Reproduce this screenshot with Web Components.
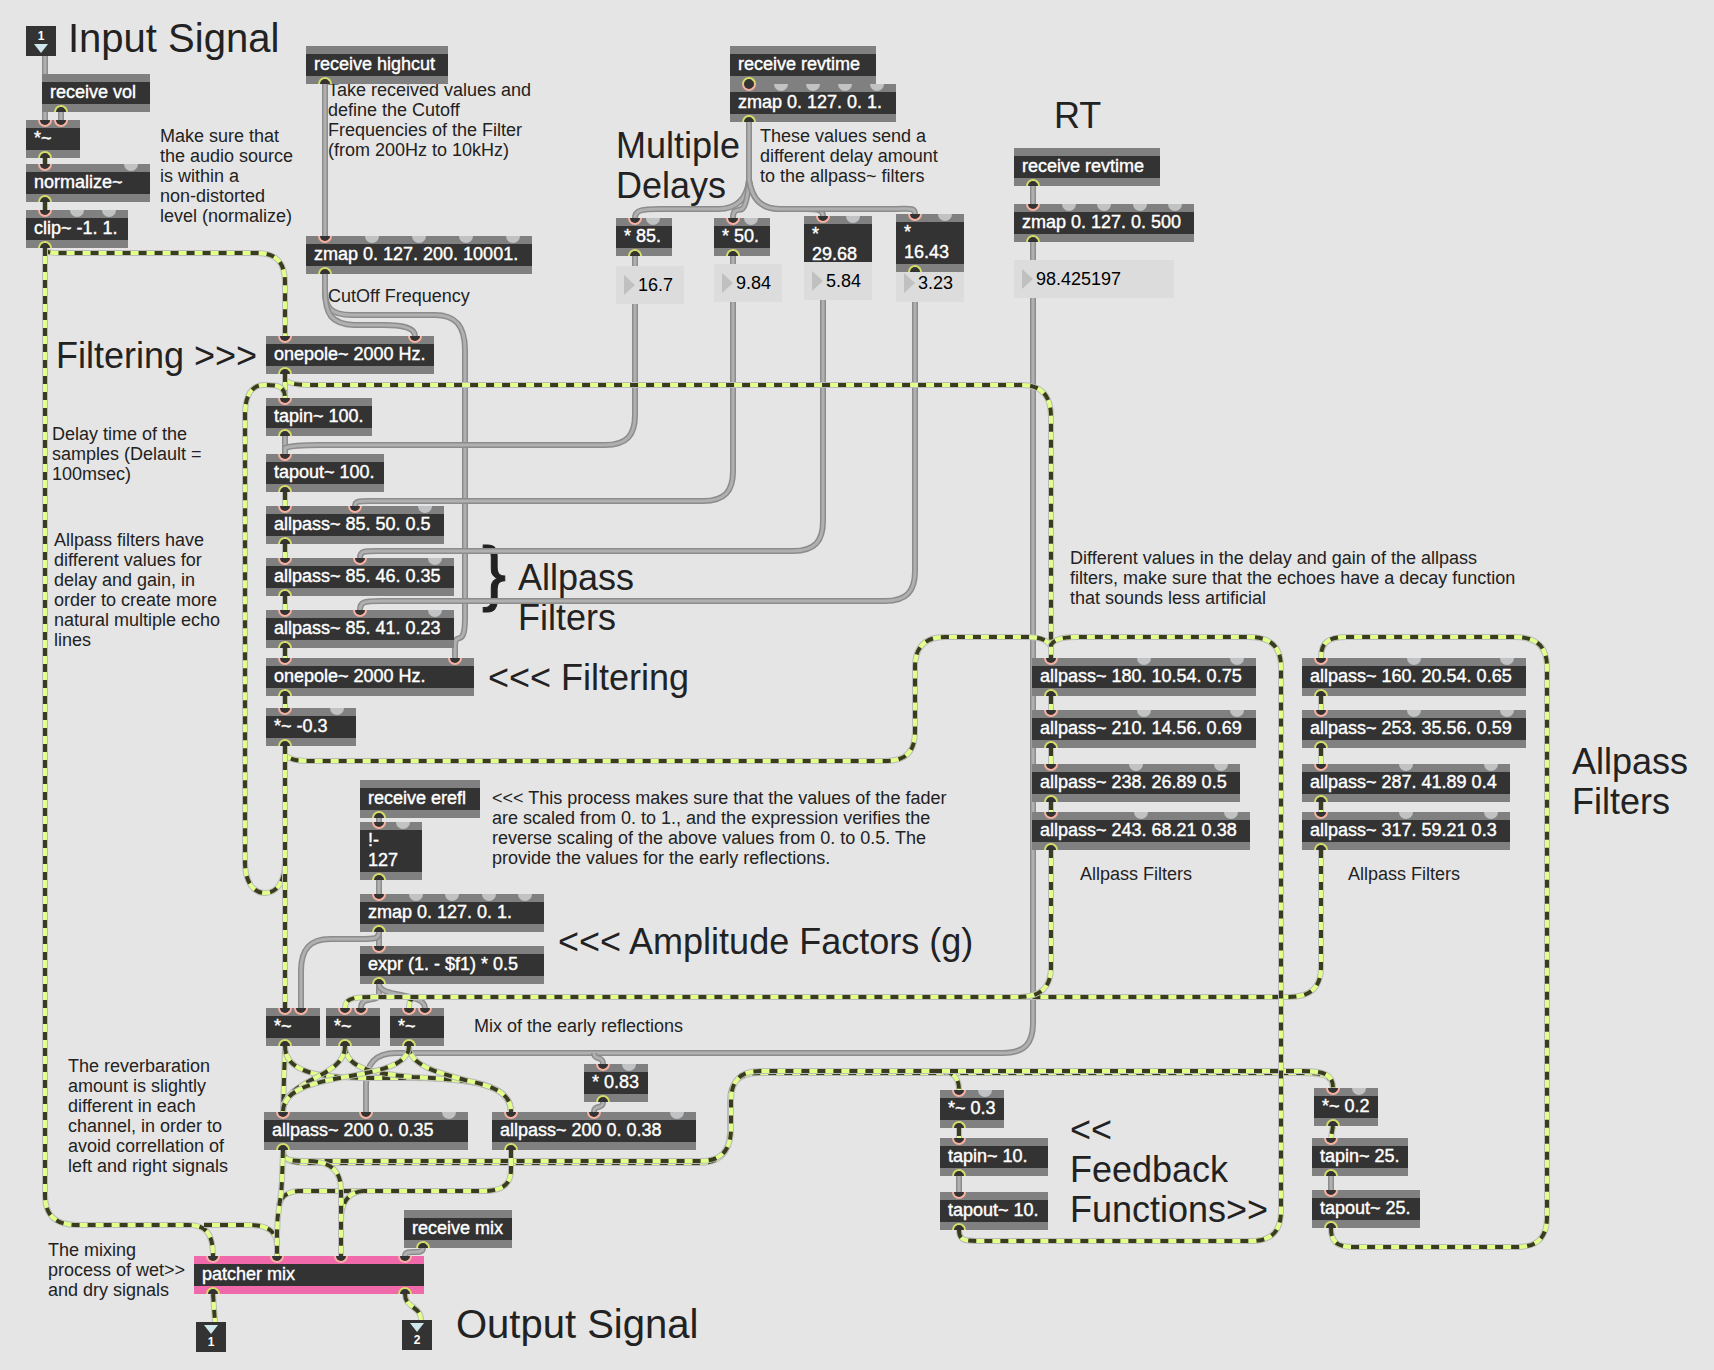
<!DOCTYPE html>
<html lang="en">
<head>
<meta charset="utf-8">
<title>Reverb patch</title>
<style>
  body { margin: 0; background: #e5e5e5; font-family: "Liberation Sans", Arial, sans-serif; }
</style>
</head>
<body>
<patch-canvas>
  <patch-note x="68" y="16" size="title">Input Signal</patch-note>
  <patch-note x="328" y="80">Take received values and
define the Cutoff
Frequencies of the Filter
(from 200Hz to 10kHz)</patch-note>
  <patch-note x="160" y="126">Make sure that
the audio source
is within a
non-distorted
level (normalize)</patch-note>
  <patch-note x="328" y="286">CutOff Frequency</patch-note>
  <patch-note x="56" y="336" size="head">Filtering &gt;&gt;&gt;</patch-note>
  <patch-note x="616" y="126" size="head">Multiple
Delays</patch-note>
  <patch-note x="760" y="126">These values send a
different delay amount
to the allpass~ filters</patch-note>
  <patch-note x="1054" y="96" size="head">RT</patch-note>
  <patch-note x="52" y="424">Delay time of the
samples (Delault =
100msec)</patch-note>
  <patch-note x="54" y="530">Allpass filters have
different values for
delay and gain, in
order to create more
natural multiple echo
lines</patch-note>
  <patch-note x="482" y="532" size="brace">}</patch-note>
  <patch-note x="518" y="558" size="head">Allpass
Filters</patch-note>
  <patch-note x="488" y="658" size="head">&lt;&lt;&lt; Filtering</patch-note>
  <patch-note x="492" y="788">&lt;&lt;&lt; This process makes sure that the values of the fader
are scaled from 0. to 1., and the expression verifies the
reverse scaling of the above values from 0. to 0.5. The
provide the values for the early reflections.</patch-note>
  <patch-note x="558" y="922" size="head">&lt;&lt;&lt; Amplitude Factors (g)</patch-note>
  <patch-note x="474" y="1016">Mix of the early reflections</patch-note>
  <patch-note x="68" y="1056">The reverbaration
amount is slightly
different in each
channel, in order to
avoid correllation of
left and right signals</patch-note>
  <patch-note x="48" y="1240">The mixing
process of wet&gt;&gt;
and dry signals</patch-note>
  <patch-note x="456" y="1302" size="title">Output Signal</patch-note>
  <patch-note x="1070" y="548">Different values in the delay and gain of the allpass
filters, make sure that the echoes have a decay function
that sounds less artificial</patch-note>
  <patch-note x="1080" y="864">Allpass Filters</patch-note>
  <patch-note x="1348" y="864">Allpass Filters</patch-note>
  <patch-note x="1572" y="742" size="head">Allpass
Filters</patch-note>
  <patch-note x="1070" y="1110" size="head">&lt;&lt;
Feedback
Functions&gt;&gt;</patch-note>

  <patch-cords></patch-cords>

  <patch-io x="26" y="26">1</patch-io>
  <patch-object x="42" y="74" w="108" outs="o">receive vol</patch-object>
  <patch-object x="26" y="120" w="54" ins="oo" outs="o">*~</patch-object>
  <patch-object x="26" y="164" w="124" ins="o-" outs="o">normalize~</patch-object>
  <patch-object x="26" y="210" w="102" ins="o--" outs="o">clip~ -1. 1.</patch-object>

  <patch-object x="306" y="46" w="142" outs="o">receive highcut</patch-object>
  <patch-object x="306" y="236" w="226" ins="o----" outs="o">zmap 0. 127. 200. 10001.</patch-object>

  <patch-object x="730" y="46" w="146" outs="o">receive revtime</patch-object>
  <patch-object x="730" y="84" w="166" ins="o----" outs="o">zmap 0. 127. 0. 1.</patch-object>
  <patch-object x="616" y="218" w="56" ins="o-" outs="o">* 85.</patch-object>
  <patch-object x="714" y="218" w="56" ins="o-" outs="o">* 50.</patch-object>
  <patch-object x="804" y="216" w="68" ins="o-" outs="o">*
29.68</patch-object>
  <patch-number x="616" y="266" w="68" value="16.7" label="85 scaled delay"></patch-number>
  <patch-number x="714" y="264" w="68" value="9.84" label="50 scaled delay"></patch-number>
  <patch-number x="804" y="262" w="68" value="5.84" label="29.68 scaled delay"></patch-number>
  <patch-number x="896" y="264" w="68" value="3.23" label="16.43 scaled delay"></patch-number>
  <patch-object x="896" y="214" w="68" ins="o-" outs="o">*
16.43</patch-object>

  <patch-object x="1014" y="148" w="146" outs="o">receive revtime</patch-object>
  <patch-object x="1014" y="204" w="180" ins="o----" outs="o">zmap 0. 127. 0. 500</patch-object>
  <patch-number x="1014" y="260" w="160" value="98.425197" label="Reverb time"></patch-number>

  <patch-object x="266" y="336" w="168" ins="oo" outs="o">onepole~ 2000 Hz.</patch-object>
  <patch-object x="266" y="398" w="106" ins="o" outs="o">tapin~ 100.</patch-object>
  <patch-object x="266" y="454" w="118" ins="o" outs="o">tapout~ 100.</patch-object>
  <patch-object x="266" y="506" w="178" ins="oo-" outs="o">allpass~ 85. 50. 0.5</patch-object>
  <patch-object x="266" y="558" w="188" ins="oo-" outs="o">allpass~ 85. 46. 0.35</patch-object>
  <patch-object x="266" y="610" w="188" ins="oo-" outs="o">allpass~ 85. 41. 0.23</patch-object>
  <patch-object x="266" y="658" w="208" ins="oo" outs="o">onepole~ 2000 Hz.</patch-object>
  <patch-object x="266" y="708" w="90" ins="o-" outs="o">*~ -0.3</patch-object>

  <patch-object x="360" y="780" w="120" outs="o">receive erefl</patch-object>
  <patch-object x="360" y="822" w="62" ins="o-" outs="o">!-
127</patch-object>
  <patch-object x="360" y="894" w="184" ins="o----" outs="o">zmap 0. 127. 0. 1.</patch-object>
  <patch-object x="360" y="946" w="184" ins="o" outs="o">expr (1. - $f1) * 0.5</patch-object>

  <patch-object x="266" y="1008" w="54" ins="oo" outs="o">*~</patch-object>
  <patch-object x="326" y="1008" w="54" ins="oo" outs="o">*~</patch-object>
  <patch-object x="390" y="1008" w="54" ins="oo" outs="o">*~</patch-object>
  <patch-object x="584" y="1064" w="64" ins="o-" outs="o">* 0.83</patch-object>
  <patch-object x="264" y="1112" w="204" ins="oo-" outs="o">allpass~ 200 0. 0.35</patch-object>
  <patch-object x="492" y="1112" w="204" ins="oo-" outs="o">allpass~ 200 0. 0.38</patch-object>
  <patch-object x="404" y="1210" w="108" outs="o">receive mix</patch-object>
  <patch-object x="194" y="1256" w="230" ins="oooo" outs="oo" accent>patcher mix</patch-object>
  <patch-io x="196" y="1322" out>1</patch-io>
  <patch-io x="402" y="1320" out>2</patch-io>

  <patch-object x="1032" y="658" w="224" ins="o--" outs="o">allpass~ 180. 10.54. 0.75</patch-object>
  <patch-object x="1032" y="710" w="224" ins="o--" outs="o">allpass~ 210. 14.56. 0.69</patch-object>
  <patch-object x="1032" y="764" w="208" ins="o--" outs="o">allpass~ 238. 26.89 0.5</patch-object>
  <patch-object x="1032" y="812" w="218" ins="o--" outs="o">allpass~ 243. 68.21 0.38</patch-object>
  <patch-object x="1302" y="658" w="224" ins="o--" outs="o">allpass~ 160. 20.54. 0.65</patch-object>
  <patch-object x="1302" y="710" w="224" ins="o--" outs="o">allpass~ 253. 35.56. 0.59</patch-object>
  <patch-object x="1302" y="764" w="208" ins="o--" outs="o">allpass~ 287. 41.89 0.4</patch-object>
  <patch-object x="1302" y="812" w="208" ins="o--" outs="o">allpass~ 317. 59.21 0.3</patch-object>

  <patch-object x="940" y="1090" w="64" ins="o-" outs="o">*~ 0.3</patch-object>
  <patch-object x="940" y="1138" w="108" ins="o" outs="o">tapin~ 10.</patch-object>
  <patch-object x="940" y="1192" w="108" ins="o" outs="o">tapout~ 10.</patch-object>
  <patch-object x="1314" y="1088" w="64" ins="o-" outs="o">*~ 0.2</patch-object>
  <patch-object x="1312" y="1138" w="96" ins="o" outs="o">tapin~ 25.</patch-object>
  <patch-object x="1312" y="1190" w="108" ins="o" outs="o">tapout~ 25.</patch-object>
</patch-canvas>

<script>
// Shared base: every item on the free canvas takes its place from x / y / w.
class CanvasItem extends HTMLElement {
  connectedCallback() {
    if (this.shadowRoot) return;
    const root = this.attachShadow({ mode: 'open' });
    root.innerHTML = this.render();
    this.style.left = this.getAttribute('x') + 'px';
    this.style.top = this.getAttribute('y') + 'px';
    if (this.hasAttribute('w')) this.style.width = this.getAttribute('w') + 'px';
  }
}

customElements.define('patch-canvas', class extends HTMLElement {
  constructor() {
    super();
    this.attachShadow({ mode: 'open' }).innerHTML = `
      <style>
        :host { display: block; position: relative; min-height: 100vh; overflow: hidden; background: #e5e5e5; }
      </style><slot></slot>`;
  }
});

customElements.define('patch-note', class extends CanvasItem {
  render() {
    return `<style>
      :host { display: block; position: absolute; font-size: 18px; line-height: 20px; color: #222; white-space: pre; }
      :host([size="head"]) { font-size: 36px; line-height: 40px; }
      :host([size="title"]) { font-size: 40px; line-height: 44px; }
      :host([size="brace"]) { font-size: 72px; line-height: 80px; -webkit-text-stroke: 1px #222; }
    </style><slot></slot>`;
  }
});

// An object box: strip of inlets, body text, strip of outlets. "o" is a wired port, "-" a free one.
customElements.define('patch-object', class extends CanvasItem {
  render() {
    const ports = name => [...(this.getAttribute(name) || '')]
      .map(c => `<i class="${c === 'o' ? 'wired' : 'free'}"></i>`).join('');
    return `<style>
      :host { display: block; position: absolute; --strip: #808080; background: #333; color: #fff;
              font-size: 18px; line-height: 20px; }
      :host([accent]) { --strip: #ef69ab; }
      .strip { display: flex; justify-content: space-between; height: 8px; padding: 0 12px; background: var(--strip); }
      .outs { align-items: flex-end; }
      i { box-sizing: border-box; width: 14px; height: 7px; }
      .ins i { border-radius: 0 0 7px 7px; }
      .outs i { border-radius: 7px 7px 0 0; }
      .free { background: #c0c2c4; }
      .wired { background: #333; border: 2px solid #f8b0a0; }
      .ins .wired { border-top: 0; }
      .outs .wired { border-color: #d5dc68; border-bottom: 0; }
      .text { padding: 0 8px 2px; white-space: pre; -webkit-text-stroke: 0.4px #fff; }
    </style>
    <div class="strip ins">${ports('ins')}</div>
    <div class="text"><slot></slot></div>
    <div class="strip outs">${ports('outs')}</div>`;
  }
});

customElements.define('patch-number', class extends CanvasItem {
  render() {
    return `<style>
      :host { display: flex; position: absolute; align-items: center; gap: 3px; box-sizing: border-box;
              height: 38px; padding-left: 8px; background: #dcdcdc; }
      svg { flex: none; width: 11px; height: 22px; }
      input { flex: 1; min-width: 0; height: 20px; margin: 0; padding: 0; border: 0; background: none; color: #000;
              font: 18px/20px "Liberation Sans", Arial, sans-serif; margin-bottom: 1px; }
    </style>
    <svg viewBox="0 0 11 22" aria-hidden="true"><path d="M0 1L11 11L0 21Z" fill="#c0c0c0"/></svg>
    <input type="text" inputmode="decimal" aria-label="${this.getAttribute('label')}" value="${this.getAttribute('value')}">`;
  }
});

customElements.define('patch-io', class extends CanvasItem {
  render() {
    return `<style>
      :host { display: flex; position: absolute; flex-direction: column; align-items: center; justify-content: center;
              gap: 1px; width: 30px; height: 30px; background: #333; color: #fff; font: bold 12px/14px "Liberation Sans", Arial, sans-serif; }
      :host([out]) { flex-direction: column-reverse; }
      svg { width: 14px; height: 9px; }
    </style><span><slot></slot></span>
    <svg viewBox="0 0 14 9" aria-hidden="true"><path d="M0 0H14L7 9Z" fill="#cfe8ec"/></svg>`;
  }
});

// Control cords are plain grey; signal cords are dashed.
const CONTROL = [
  'M45 56V120', 'M61 112V120',
  'M325 84V236',
  'M325 274V290C325 307 330 315 352 315H435C455 315 465 325 465 350V618C465 650 455 630 455 646V658',
  'M325 274V290C325 315 332 324 354 325H384C404 325 415 328 415 336',
  'M749 122V180C747 198 738 209 718 209H660C642 209 635 210 635 218',
  'M749 122V180C748 196 746 206 742 209C738 211 733 208 733 218',
  'M749 122V180C752 198 760 209 780 209H806C818 209 823 210 823 216',
  'M749 122V180C752 198 760 209 780 209H896C908 209 915 207 915 214',
  'M635 256V266', 'M733 256V264', 'M915 272V276',
  'M285 436V454',
  'M635 304V415C635 435 627 445 605 445H320C304 445 290 446 285 448V454',
  'M733 302V471C733 491 725 501 703 501H370C359 501 355 501 355 506',
  'M823 300V521C823 541 815 551 793 551H378C364 551 360 551 360 558',
  'M915 302V571C915 591 907 601 885 601H380C364 601 360 602 360 610',
  'M1033 186V204', 'M1033 242V260',
  'M1033 298V1023C1033 1043 1025 1053 1003 1053H396C376 1053 366 1063 366 1085V1112',
  'M594 1053C594 1061 603 1055 603 1064',
  'M603 1102C603 1110 594 1104 594 1112',
  'M379 818V822', 'M379 880V894', 'M379 932V946',
  'M379 932C379 939 375 939 360 939H330C310 939 301 949 301 971V1008',
  'M379 984V994C379 1003 361 995 361 1008',
  'M379 984C379 998 425 992 425 1008',
  'M959 1176V1192', 'M1331 1176V1190',
  'M423 1248C423 1256 405 1248 405 1256',
];
const SIGNAL = [
  'M45 158V164', 'M45 202V210',
  'M45 248C45 252 48 253 60 253H257C277 253 285 263 285 283V336',
  'M45 248V1195C45 1215 55 1225 77 1225H188C205 1225 213 1232 213 1256',
  'M204 1225H248C266 1225 277 1230 277 1246',
  'M285 374V380C290 384 298 385 308 385H1021C1041 385 1051 395 1051 417V658',
  'M285 374V398',
  'M285 492V506', 'M285 544V558', 'M285 596V610', 'M285 648V658', 'M285 696V708',
  'M285 746V755C290 760 298 761 310 761H885C905 761 915 753 915 731V667C915 647 925 637 945 637H1026C1038 637 1048 639 1051 647V658',
  'M285 746V862C285 883 276 893 265 893C254 893 245 883 245 862V415C245 395 252 385 264 385C274 385 285 384 285 398',
  'M285 746V1008',
  'M1051 696V710', 'M1051 748V764', 'M1051 802V812',
  'M1321 696V710', 'M1321 748V764', 'M1321 802V812',
  'M1321 850V967C1321 987 1311 997 1289 997H420C411 997 409 1000 409 1008',
  'M1051 850V967C1051 987 1041 997 1019 997H374C354 997 345 998 345 1008',
  'M285 1046L283 1112',
  'M285 1046C285 1074 323 1077 363 1078H413C470 1079 511 1083 511 1112',
  'M345 1046C345 1070 380 1074 413 1077C470 1080 511 1083 511 1112',
  'M409 1046C409 1066 440 1073 465 1080C492 1086 511 1092 511 1112',
  'M345 1046C345 1079 283 1078 283 1112',
  'M409 1046C409 1086 283 1066 283 1112',
  'M283 1150C283 1161 290 1163 310 1163H698C718 1163 729 1155 730 1133V1101C730 1081 740 1073 760 1073H1300C1320 1073 1333 1074 1333 1088',
  'M283 1150C283 1161 290 1161 310 1161H700C720 1161 730 1152 731 1131V1101C731 1081 740 1071 760 1071H938C952 1071 959 1076 959 1090',
  'M934 1071H1302C1322 1071 1333 1073 1333 1088',
  'M511 1150V1170C511 1184 503 1191 483 1191H298C286 1192 281 1197 279 1206',
  'M363 1191C349 1192 341 1202 341 1220',
  'M310 1161C330 1162 341 1170 341 1190V1256',
  'M283 1150L282 1180C281 1206 277 1206 277 1236V1256',
  'M213 1294L215 1322', 'M405 1294C405 1308 421 1306 421 1320',
  'M959 1128V1138', 'M1333 1126L1331 1138',
  'M959 1230C959 1240 964 1241 978 1241H1251C1271 1241 1281 1232 1281 1211V667C1281 647 1271 637 1249 637H1076C1064 637 1054 639 1051 645V658',
  'M1331 1228C1331 1243 1338 1247 1354 1247H1517C1537 1247 1547 1238 1547 1217V667C1547 647 1537 637 1515 637H1348C1328 637 1321 642 1321 658',
];
customElements.define('patch-cords', class extends HTMLElement {
  connectedCallback() {
    if (this.shadowRoot) return;
    const signal = SIGNAL.map(d => `<path class="se" d="${d}"/><path class="sc" d="${d}"/><path class="sd" d="${d}"/>`).join('');
    const control = CONTROL.map(d => `<path class="ce" d="${d}"/><path class="cc" d="${d}"/>`).join('');
    this.attachShadow({ mode: 'open' }).innerHTML = `<style>
      :host { display: block; position: absolute; inset: 0; pointer-events: none; }
      svg { display: block; width: 100%; height: 100%; overflow: visible; }
      path { fill: none; }
      .ce { stroke: #8c8c8c; stroke-width: 6; }
      .cc { stroke: #b0b0b0; stroke-width: 3; }
      .se { stroke: #bababa; stroke-width: 6; }
      .sc { stroke: #e2ff8a; stroke-width: 4; }
      .sd { stroke: #3a3c22; stroke-width: 4; stroke-dasharray: 8 8; }
    </style><svg aria-hidden="true">${control}${signal}</svg>`;
  }
});
</script>
</body>
</html>
